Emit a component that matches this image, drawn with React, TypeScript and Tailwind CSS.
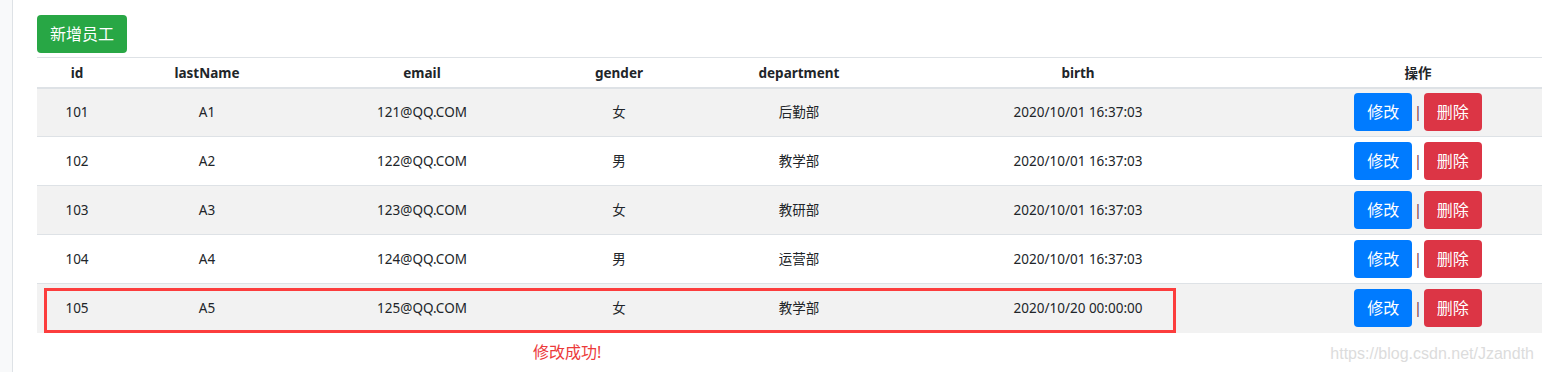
const rows = [
  { id: 101, lastName: "A1", email: "121@QQ.COM", gender: "女", department: "后勤部", birth: "2020/10/01 16:37:03" },
  { id: 102, lastName: "A2", email: "122@QQ.COM", gender: "男", department: "教学部", birth: "2020/10/01 16:37:03" },
  { id: 103, lastName: "A3", email: "123@QQ.COM", gender: "女", department: "教研部", birth: "2020/10/01 16:37:03" },
  { id: 104, lastName: "A4", email: "124@QQ.COM", gender: "男", department: "运营部", birth: "2020/10/01 16:37:03" },
  { id: 105, lastName: "A5", email: "125@QQ.COM", gender: "女", department: "教学部", birth: "2020/10/20 00:00:00" },
];

const font = { fontFamily: '"Noto Sans", "Noto Sans CJK SC", sans-serif' };

export default function App() {
  return (
    <div className="flex w-full h-[372px] overflow-hidden bg-white text-[#212529]" style={font}>
      {/* sidebar edge */}
      <div className="w-[13px] shrink-0 bg-[#f8f9fa] border-r border-[#dee2e6]" />

      <main className="relative flex-1 min-w-0 pl-6 pt-[15px] overflow-hidden">
        <button className="h-[38px] px-[13px] rounded bg-[#28a745] text-white text-base leading-none">
          新增员工
        </button>

        <div className="relative mt-[4px] w-[1550px]">
          <table className="w-[1550px] table-fixed border-collapse text-[13.5px] text-center">
            <colgroup>
              <col className="w-[80px]" />
              <col className="w-[180px]" />
              <col className="w-[250px]" />
              <col className="w-[144px]" />
              <col className="w-[216px]" />
              <col className="w-[342px]" />
              <col className="w-[338px]" />
            </colgroup>
            <thead>
              <tr className="h-[30px] border-t border-b-2 border-[#dee2e6]">
                <th className="font-bold pt-[2px]">id</th>
                <th className="font-bold pt-[2px]">lastName</th>
                <th className="font-bold pt-[2px]">email</th>
                <th className="font-bold pt-[2px]">gender</th>
                <th className="font-bold pt-[2px]">department</th>
                <th className="font-bold pt-[2px]">birth</th>
                <th className="font-bold pt-[2px]">操作</th>
              </tr>
            </thead>
            <tbody>
              {rows.map((r, i) => (
                <tr key={r.id} className={`h-[49px] border-t border-[#dee2e6] ${i % 2 === 0 ? "bg-[#f2f2f2]" : "bg-white"}`}>
                  <td>{r.id}</td>
                  <td>{r.lastName}</td>
                  <td>{r.email}</td>
                  <td>{r.gender}</td>
                  <td>{r.department}</td>
                  <td>{r.birth}</td>
                  <td>
                    <div className="flex items-center justify-center">
                      <button className="h-[38px] px-[13px] rounded bg-[#007bff] text-white text-base leading-none">修改</button>
                      <span className="mx-[2px] text-[#6b1d3f]">|</span>
                      <button className="h-[38px] px-[13px] rounded bg-[#dc3545] text-white text-base leading-none">删除</button>
                    </div>
                  </td>
                </tr>
              ))}
            </tbody>
          </table>

          {/* annotation box round the edited row */}
          <div className="absolute left-[7px] top-[231px] w-[1132px] h-[45px] border-[3px] border-[#fc3d3d] pointer-events-none" />
        </div>

        <div className="pl-[496px] pt-[11px] text-base leading-none text-[#ec3a3a]">修改成功!</div>

        <div
          className="absolute right-[8px] top-[346px] text-[16px] leading-none text-[#dcdcdc]"
          style={{ fontFamily: '"Liberation Sans", Arial, sans-serif' }}
        >
          https://blog.csdn.net/Jzandth
        </div>
      </main>
    </div>
  );
}
